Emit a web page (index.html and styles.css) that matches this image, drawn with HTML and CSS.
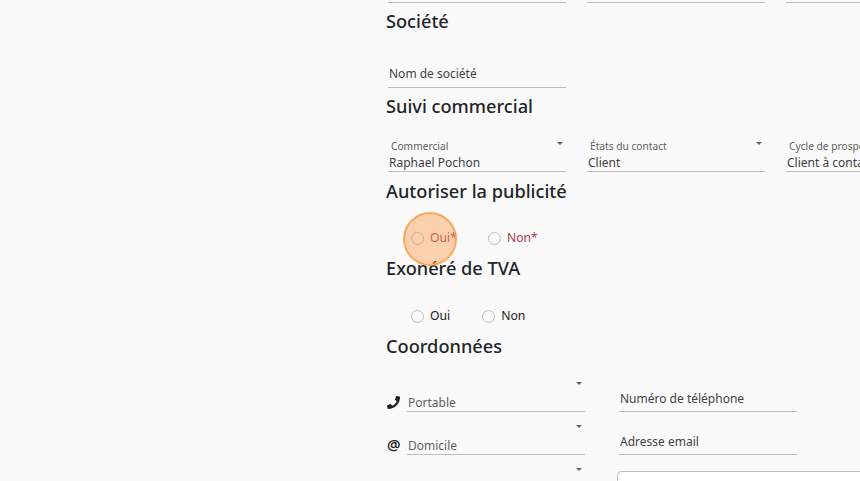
FILE: index.html
```html
<!DOCTYPE html>
<html lang="fr">
<head>
    <meta charset="UTF-8">
    <meta name="viewport" content="width=device-width, initial-scale=1.0">
    <title>Contact</title>
    <link rel="stylesheet" href="styles.css">
</head>
<body>
    <div class="container">
        <div class="field-row top-row">
            <div class="field"></div>
            <div class="field"></div>
            <div class="field"></div>
        </div>

        <h2>Société</h2>
        <div class="field-row company-row">
            <div class="field"><span class="value plain">Nom de société</span></div>
        </div>

        <h2>Suivi commercial</h2>
        <div class="field-row select-row">
            <div class="field select">
                <span class="small-label">Commercial</span>
                <span class="value">Raphael Pochon</span>
                <span class="caret"></span>
            </div>
            <div class="field select">
                <span class="small-label">États du contact</span>
                <span class="value">Client</span>
                <span class="caret"></span>
            </div>
            <div class="field select">
                <span class="small-label">Cycle de prospection</span>
                <span class="value">Client à contacter</span>
            </div>
        </div>

        <h2>Autoriser la publicité</h2>
        <div class="radio-row required">
            <label class="radio"><span class="dot"></span>Oui*</label>
            <label class="radio"><span class="dot"></span>Non*</label>
        </div>

        <h2>Exonéré de TVA</h2>
        <div class="radio-row optional">
            <label class="radio"><span class="dot"></span>Oui</label>
            <label class="radio"><span class="dot"></span>Non</label>
        </div>

        <h2>Coordonnées</h2>
        <div class="contact-row">
            <svg class="icon" viewBox="0 0 512 512"><path d="M493.400 24.600l-104-24c-11.300-2.600-22.900 3.300-27.500 13.900l-48 112c-4.200 9.800-1.400 21.300 6.900 28l60.600 49.600c-36 76.700-98.900 140.500-177.200 177.200l-49.600-60.600c-6.800-8.300-18.200-11.100-28-6.900l-112 48C3.900 366.500-2 378.100.6 389.400l24 104C27.100 504.200 36.700 512 48 512c256.100 0 464-207.500 464-464 0-11.200-7.700-20.900-18.600-23.400z"/></svg>
            <div class="field type"><span class="value muted">Portable</span><span class="caret"></span></div>
            <div class="field phone"><span class="value plain">Numéro de téléphone</span></div>
        </div>
        <div class="contact-row">
            <span class="icon at">@</span>
            <div class="field type"><span class="value muted">Domicile</span><span class="caret"></span></div>
            <div class="field phone"><span class="value plain">Adresse email</span></div>
        </div>
        <div class="contact-row last">
            <div class="field type"><span class="caret"></span></div>
            <div class="address"></div>
        </div>
    </div>

    <div class="click-marker"></div>
</body>
</html>
```

FILE: styles.css
```css
html, body {
    height: 481px;
    overflow: hidden;
}
body {
    margin: 0;
    background-color: #fafafa;
    font-family: "Noto Sans", "Open Sans", sans-serif;
    color: #212121;
}
.container {
    width: 474px;
    margin-left: 386px;
}
h2 {
    margin: 0;
    height: 24px;
    font-size: 18.200px;
    line-height: 24px;
    font-weight: 500;
    color: #212529;
}

.field-row {
    display: flex;
    gap: 21px;
    padding-left: 2px;
}
.field {
    position: relative;
    flex: 0 0 178px;
    box-sizing: border-box;
    border-bottom: 1px solid #bdbdbd;
}
.value {
    display: block;
    font-size: 12px;
    line-height: 18px;
    color: #424242;
    white-space: nowrap;
}
.value.plain {
    padding-left: 1px;
}
.value.muted {
    padding-left: 1px;
    color: #616161;
}
.small-label {
    display: block;
    padding-left: 3px;
    font-size: 10.200px;
    line-height: 15px;
    color: #616161;
    white-space: nowrap;
}
.caret {
    position: absolute;
    right: 3px;
    top: 4px;
    border-left: 3.500px solid transparent;
    border-right: 3.500px solid transparent;
    border-top: 3.500px solid #616161;
}

.top-row {
    margin-bottom: 6px;
}
.top-row .field {
    height: 3px;
}
.company-row {
    margin-top: 31px;
    margin-bottom: 6px;
}
.company-row .field {
    height: 24px;
    padding-top: 1px;
}
.select-row {
    margin-top: 20px;
    margin-bottom: 7px;
}
.select-row .field {
    height: 34px;
    padding-top: 1px;
}
.select-row .value {
    padding-left: 1px;
}

.radio-row {
    display: flex;
    gap: 31px;
    padding-left: 25px;
    height: 20px;
    margin-top: 25px;
    margin-bottom: 8px;
    font-size: 12.200px;
    line-height: 20px;
}
.radio-row.optional {
    gap: 32px;
    margin-top: 26px;
}
.radio {
    display: flex;
    align-items: center;
    gap: 6px;
}
.dot {
    width: 13px;
    height: 13px;
    box-sizing: border-box;
    border: 1px solid #bdbdbd;
    border-radius: 50%;
}
.required {
    color: #b23b4e;
}

.contact-row {
    display: flex;
    align-items: flex-end;
    height: 43px;
}
h2 + .contact-row {
    margin-top: 11px;
}
.contact-row .icon {
    flex: 0 0 13px;
    width: 13px;
    height: 13px;
    margin: 0 7px 3px 1px;
    fill: #212121;
}
.contact-row .at {
    height: 18px;
    margin-bottom: 2px;
    font-size: 15px;
    line-height: 18px;
    font-weight: 600;
    text-align: center;
}
.contact-row .type {
    height: 43px;
    padding-top: 25px;
}
.contact-row .type .caret {
    top: 13px;
}
.contact-row .phone {
    height: 24px;
    margin-left: 34px;
    padding-top: 2px;
}
.contact-row.last {
    align-items: flex-start;
    padding-left: 21px;
}
.contact-row.last .type {
    border-bottom: none;
}
.address {
    flex: 0 0 300px;
    height: 40px;
    margin-top: 16px;
    margin-left: 32px;
    box-sizing: border-box;
    border: 1px solid #bdbdbd;
    border-radius: 4px;
    background-color: #fff;
}

/* recording highlight round the last click */
.click-marker {
    position: absolute;
    left: 403px;
    top: 212px;
    width: 54px;
    height: 54px;
    box-sizing: border-box;
    border: 2px solid rgba(255, 152, 60, 0.75);
    border-radius: 50%;
    background-color: rgba(250, 150, 70, 0.42);
}
```
